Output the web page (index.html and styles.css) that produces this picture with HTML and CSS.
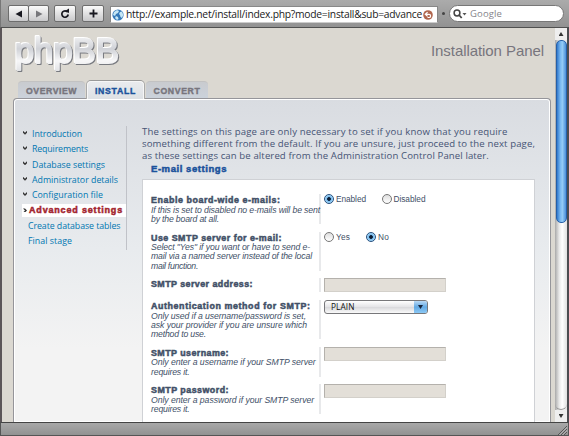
FILE: index.html
```html
<!DOCTYPE html>
<html lang="en">
<head>
<meta charset="utf-8">
<title>Installation Panel</title>
<link rel="stylesheet" href="styles.css">
</head>
<body>
<div class="window">
  <header class="toolbar">
    <div class="btn-pair">
      <span class="btn"><svg width="8" height="8" viewBox="0 0 8 8"><path d="M7 0.5v7L0.5 4z" fill="#181820"/></svg></span>
      <span class="btn"><svg width="8" height="8" viewBox="0 0 8 8"><path d="M1 0.5v7L7.5 4z" fill="#77777b"/></svg></span>
    </div>
    <span class="btn solo"><svg width="10" height="11" viewBox="0 0 10 11"><path d="M7.6 4.1A3.2 3.2 0 1 0 8.2 6.5" fill="none" stroke="#181820" stroke-width="1.7"/><path d="M4.6 3.2 9 5V0.4z" fill="#181820"/></svg></span>
    <span class="btn solo"><svg width="9" height="9" viewBox="0 0 9 9"><path d="M4.5 0.5v8M0.5 4.5h8" stroke="#181820" stroke-width="1.8"/></svg></span>
    <div class="address">
      <svg class="globe" width="12" height="12" viewBox="0 0 12 12"><circle cx="6" cy="6" r="5.6" fill="#3478b8"/><path d="M2 3 5 1l2 1-1 2-2 1-1 2-2-1zM8 3l2-.5L11.3 6 10 9 8.500 8 8 6 7 5zM4 7l2 1 .5 2L5 11 3 9z" fill="#c5e6f5"/></svg>
      <span class="url t" data-w="296">http://example.net/install/index.php?mode=install&amp;sub=advance</span>
      <svg class="reload" width="10" height="10" viewBox="0 0 10 10"><circle cx="5" cy="5" r="4.8" fill="#b0664e"/><path d="M2.500 4.300H6a1.600 1.600 0 0 1 0 3.200H4.500M4.600 2.200 2.300 4.300 4.600 6.400" fill="none" stroke="#fff" stroke-width="1.200"/></svg>
    </div>
    <i class="grip"></i>
    <div class="search">
      <svg width="14" height="10" viewBox="0 0 14 10"><circle cx="4" cy="4" r="2.900" fill="none" stroke="#444" stroke-width="1.500"/><path d="M6 6l2.700 3" stroke="#444" stroke-width="1.800"/><path d="M9.500 4h4l-2 2.500z" fill="#555"/></svg>
      <span class="t" data-w="32">Google</span>
    </div>
  </header>

  <div class="viewport">
    <div class="page">
      <div class="masthead">
        <svg class="logo" width="112" height="46" viewBox="0 0 112 46">
          <defs><linearGradient id="silver" gradientUnits="userSpaceOnUse" x1="0" y1="4" x2="0" y2="38"><stop offset="0" stop-color="#eeeff1"/><stop offset="0.35" stop-color="#d0d2d7"/><stop offset="0.7" stop-color="#f7f7f8"/><stop offset="1" stop-color="#e2e3e6"/></linearGradient></defs>
          <text x="3" y="30" textLength="104" lengthAdjust="spacingAndGlyphs">phpBB</text>
        </svg>
        <h1><span class="t" data-w="113">Installation Panel</span></h1>
      </div>
      <nav class="tabs">
        <a class="tab w1"><span class="t" data-w="51">OVERVIEW</span></a>
        <a class="tab w2 active"><span class="t" data-w="41">INSTALL</span></a>
        <a class="tab w3"><span class="t" data-w="47">CONVERT</span></a>
      </nav>
      <div class="panel">
        <ul class="menu">
          <li><i class="chev"></i><span class="t" data-w="50">Introduction</span></li>
          <li><i class="chev"></i><span class="t" data-w="56">Requirements</span></li>
          <li><i class="chev"></i><span class="t" data-w="73">Database settings</span></li>
          <li><i class="chev"></i><span class="t" data-w="86">Administrator details</span></li>
          <li><i class="chev"></i><span class="t" data-w="71">Configuration file</span></li>
          <li class="current"><i class="chev side"></i><span class="t" data-w="94">Advanced settings</span></li>
          <li class="sub"><span class="t" data-w="92.5">Create database tables</span></li>
          <li class="sub"><span class="t" data-w="44">Final stage</span></li>
        </ul>
        <main>
          <p class="intro"><span class="t" data-w="365.5">The settings on this page are only necessary to set if you know that you require</span><br><span class="t" data-w="393">something different from the default. If you are unsure, just proceed to the next page,</span><br><span class="t" data-w="347">as these settings can be altered from the Administration Control Panel later.</span></p>
          <h2><span class="t" data-w="76">E-mail settings</span></h2>
          <form class="box">
            <div class="row two">
              <div class="term"><b><span class="t" data-w="129.5">Enable board-wide e-mails:</span></b><em><span class="t" data-w="169">If this is set to disabled no e-mails will be sent</span><br><span class="t" data-w="68">by the board at all.</span></em></div>
              <div class="field"><label class="c1"><i class="radio on"></i><span class="t" data-w="30">Enabled</span></label><label><i class="radio"></i><span class="t" data-w="32">Disabled</span></label></div>
            </div>
            <div class="row three">
              <div class="term"><b><span class="t" data-w="131">Use SMTP server for e-mail:</span></b><em><span class="t" data-w="159">Select "Yes" if you want or have to send e-</span><br><span class="t" data-w="161">mail via a named server instead of the local</span><br><span class="t" data-w="47">mail function.</span></em></div>
              <div class="field"><label class="c2"><i class="radio"></i><span class="t" data-w="14">Yes</span></label><label><i class="radio on"></i><span class="t" data-w="11">No</span></label></div>
            </div>
            <div class="row one">
              <div class="term"><b><span class="t" data-w="102">SMTP server address:</span></b></div>
              <div class="field"><i class="input"></i></div>
            </div>
            <div class="row three">
              <div class="term"><b><span class="t" data-w="159.500">Authentication method for SMTP:</span></b><em><span class="t" data-w="155">Only used if a username/password is set,</span><br><span class="t" data-w="156">ask your provider if you are unsure which</span><br><span class="t" data-w="55">method to use.</span></em></div>
              <div class="field"><div class="select"><span class="t" data-w="23.500">PLAIN</span><i class="arrow"></i></div></div>
            </div>
            <div class="row two">
              <div class="term"><b><span class="t" data-w="78">SMTP username:</span></b><em><span class="t" data-w="164.500">Only enter a username if your SMTP server</span><br><span class="t" data-w="38.500">requires it.</span></em></div>
              <div class="field"><i class="input"></i></div>
            </div>
            <div class="row two">
              <div class="term"><b><span class="t" data-w="78">SMTP password:</span></b><em><span class="t" data-w="163">Only enter a password if your SMTP server</span><br><span class="t" data-w="38.500">requires it.</span></em></div>
              <div class="field"><i class="input"></i></div>
            </div>
          </form>
        </main>
      </div>
    </div>
    <div class="scrollbar"><i class="up"></i><i class="thumb"></i><i class="track"></i><i class="down"></i></div>
  </div>
  <footer class="statusbar"><svg width="9" height="9" viewBox="0 0 9 9"><path d="M0 9 9 0M3 9 9 3M6 9 9 6" stroke="#555" stroke-width="1"/><path d="M1 9.500 9.500 1M4 9.500 9.500 4" stroke="#ccc" stroke-width=".6"/></svg></footer>
</div>
<script src="fit.js"></script>
</body>
</html>
```
FILE: fit.js
```js
// Tune the tracking of each line of text so that it fills its measure.
document.querySelectorAll('.t').forEach(function (el) {
  var want = parseFloat(el.dataset.w);
  var gap = want - el.getBoundingClientRect().width;
  el.style.letterSpacing = gap / el.textContent.length + 'px';
});
```
FILE: styles.css
```css
* { box-sizing: border-box; }
body { margin: 0; font-family: "Open Sans", "Noto Sans", sans-serif; color: #536482; overflow: hidden; }
i { display: block; flex: none; }
svg { display: block; flex: none; }
.t { display: inline-block; white-space: pre; }
.window { width: 569px; height: 436px; display: flex; flex-direction: column; background: #999; }

/* Browser toolbar */
.toolbar { height: 28px; flex: none; display: flex; align-items: flex-start; padding: 5px 0 0 7px; background: linear-gradient(#ababab, #929292); border-bottom: 1px solid #505050; border-left: 1px solid #777; }
.btn-pair { display: flex; width: 41px; margin-right: 5px; }
.btn { height: 17px; flex: 1; display: flex; align-items: center; justify-content: center; background: linear-gradient(#fafafa, #c9c9cb); border: 1px solid #6d6d6d; border-radius: 2px; }
.btn-pair .btn + .btn { margin-left: -1px; }
.btn.solo { flex: none; width: 22px; margin-right: 6px; }
.address { width: 328px; height: 17px; margin-top: 1px; background: #fff; border: 1px solid #888; border-bottom-color: #ccc; display: flex; align-items: center; padding-left: 1px; font-size: 10.300px; line-height: 15px; color: #1a1a1a; }
.globe { margin-right: 2px; }
.reload { margin-left: 1px; }
.grip { width: 3px; height: 3px; border-radius: 50%; background: #444; margin: 7px 4px 0 4px; }
.search { width: 115px; height: 17px; border-radius: 9px; background: #fff; border: 1px solid #777; display: flex; align-items: center; padding-left: 3px; font-size: 9.500px; line-height: 15px; color: #85858b; }
.search svg { margin-right: 3px; }

/* Page */
.viewport { flex: 1; min-height: 0; display: flex; border-left: 2px solid #5b5558; border-right: 2px solid #4c4c50; background: #dbd8d1; }
.page { flex: 1; min-width: 0; padding: 0 6px 0 11px; display: flex; flex-direction: column; }
.masthead { height: 53px; display: flex; justify-content: space-between; padding: 5px 5px 0 0; flex: none; }
.logo { margin-left: -1px; overflow: visible; }
.logo text { font: 35px "Liberation Sans", sans-serif; fill: url(#silver); stroke: url(#silver); stroke-width: 1.800px; stroke-linejoin: round; filter: drop-shadow(-.5px -.5px 0 #fff) drop-shadow(1px 1px .6px #77797f); }
h1 { margin: 10px 0 0; font: 15px/16px "Liberation Sans", sans-serif; color: #77757d; }
.tabs { height: 17px; display: flex; gap: 2px; padding-left: 5px; flex: none; z-index: 1; }
.tab { height: 17px; background: linear-gradient(#c9cbcf, #cbd2db); border-radius: 4px 4px 0 0; border-top: 1px solid #c2c2c2; font: bold 8.700px/18px "Liberation Sans", sans-serif; -webkit-text-stroke: .4px; color: #77757d; text-align: center; }
.w1 { width: 67px; }
.w2 { width: 57px; }
.w3 { width: 62px; }
.tab.active { height: 19px; color: #1b529c; background: linear-gradient(#e9ebee, #dde0e4); border: 1px solid #f6f6f6; border-bottom: 0; box-shadow: 0 -1px 0 #999, 1px 0 0 #aaa, -1px 0 0 #aaa; clip-path: inset(-2px -2px 1px -2px); }
.panel { flex: 1; min-height: 0; width: 538px; display: flex; background: linear-gradient(#d9dce1, #e8ebee 150px, #f3f3f3 250px); border: 1px solid #95959a; border-bottom: 0; border-radius: 4px 4px 0 0; box-shadow: inset 0 0 0 1px #fff; overflow: hidden; align-items: flex-start; }

/* Steps menu */
.menu { list-style: none; margin: 27px 0 0 8px; padding: 1px 0 0; width: 105px; height: 124px; border-right: 1px solid #c0c2c8; font-size: 8.800px; line-height: 15.350px; color: #0076b1; flex: none; }
.menu li { height: 15.350px; display: flex; padding-left: 1px; width: 104px; align-items: center; }
.menu .chev { width: 4px; height: 4px; margin: -4px 5px 0 0; background: #333; clip-path: polygon(0 0, 50% 50%, 100% 0, 100% 50%, 50% 100%, 0 50%); }
.menu .chev.side { clip-path: polygon(0 0, 50% 0, 100% 50%, 50% 100%, 0 100%, 50% 50%); margin: 0 2px 0 0; }
.menu .current { background: #fff; height: 13.500px; margin: 0 0 1.900px; color: #a3252f; font: bold 9px/14px "Liberation Sans", sans-serif; -webkit-text-stroke: .5px; }
.menu .sub { padding-left: 6px; }

/* Settings form */
main { margin: 27px 0 0 15px; width: 393px; }
.intro { margin: 0; font-size: 9.600px; line-height: 12.200px; height: 37px; color: #465475; }
.intro .t, em .t { vertical-align: top; }
h2 { margin: 0 0 0 9px; font: bold 9.500px/12px "Liberation Sans", sans-serif; -webkit-text-stroke: .5px; color: #1b529c; height: 16px; width: 76px; }
.box { margin: 0; height: 262px; background: #fff; border: 1px solid #cfd1d5; padding: 14px 0 0 8px; display: flex; flex-direction: column; gap: 7.700px; font-family: "Liberation Sans", sans-serif; }
.row { display: flex; flex: none; }
.one { height: 14px; }
.two { height: 30px; }
.three { height: 39px; }
.term { width: 170px; border-right: 2px solid #e8e9eb; white-space: nowrap; }
.term b { display: block; font-size: 8.900px; line-height: 9px; padding-top: 2px; height: 11.500px; -webkit-text-stroke: .5px; color: #425067; }
.term em { display: block; font-size: 8.700px; line-height: 9.300px; color: #425067; }
.field { padding-left: 3px; display: flex; font-size: 8.300px; align-items: flex-start; color: #425067; }
.field label { display: flex; gap: 2px; line-height: 10px; }
.c1 { width: 57.500px; }
.c2 { width: 42px; }
.radio { width: 10px; height: 10px; border-radius: 50%; border: 1px solid #777; background: linear-gradient(#ddd, #fff); }
.radio.on { border-color: #28507f; background: radial-gradient(circle, #0c1c33 0 1.500px, #74b7ec 2.200px, #a8daf9 4px); }
.input { width: 122px; height: 14px; background: #e3dfd8; border: 1px solid #b4b1ac; border-right-color: #d3d0ca; border-bottom-color: #d3d0ca; }
.select { width: 104px; height: 14px; border: 1px solid #77777a; border-radius: 3px; background: linear-gradient(#fff, #e3e3e6 50%, #d8d8db 51%, #fafafa); display: flex; justify-content: space-between; padding-left: 6px; overflow: hidden; color: #111; line-height: 12px; font-family: "Open Sans", sans-serif; }
.arrow { width: 13px; height: 12px; background: linear-gradient(#b9d9f5, #62a9e4 50%, #8cc9f5); padding: 4px 0 0 4px; }
.arrow::after { content: ""; display: block; width: 5px; height: 4px; background: #15243c; clip-path: polygon(0 0, 100% 0, 50% 100%); }

/* Scrollbar and status bar */
.scrollbar { width: 12px; flex: none; display: flex; flex-direction: column; align-items: center; background: linear-gradient(90deg, #a9a9a9, #e8e8e8 35%, #fff 60%, #e0e0e0); }
.up, .down { width: 12px; height: 12px; padding-top: 4px; background: #eee; }
.up::after, .down::after { content: ""; display: block; margin: 0 auto; width: 5px; height: 4px; background: #333; clip-path: polygon(50% 0, 100% 100%, 0 100%); }
.down::after { clip-path: polygon(0 0, 100% 0, 50% 100%); }
.thumb { width: 11px; height: 183px; border-radius: 5px; border: 1px solid #2660a8; background: linear-gradient(90deg, #3279cd, #75b5ef 35%, #93cbf6 60%, #4b8ed8); }
.track { flex: 1; width: 12px; border-bottom: 1px solid #999; border-radius: 0 0 6px 6px; }
.statusbar { height: 14px; flex: none; background: linear-gradient(#a8a8a8, #929292); border: 1px solid #555; border-top-color: #444; display: flex; justify-content: flex-end; align-items: flex-end; padding-right: 1px; }
```
